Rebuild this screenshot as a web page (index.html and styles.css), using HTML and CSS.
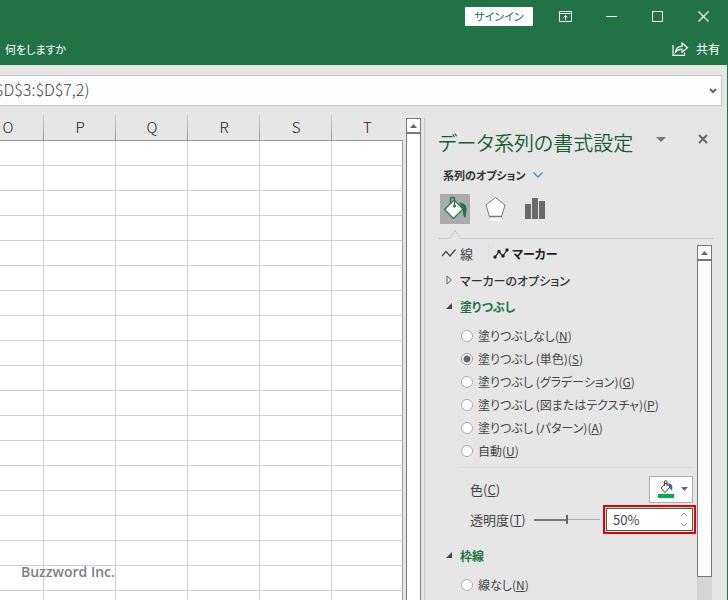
FILE: index.html
```html
<!DOCTYPE html>
<html lang="ja">
<head>
    <meta charset="UTF-8">
    <meta name="viewport" content="width=device-width, initial-scale=1.0">
    <title>Excel</title>
    <link rel="stylesheet" href="styles.css">
</head>
<body>
    <header class="title-bar">
        <div class="window-row">
            <button class="sign-in">サインイン</button>
            <button class="window-button" aria-label="リボンの表示オプション">
                <svg width="13" height="11" viewBox="0 0 13 11" fill="none" stroke="#fff"><path d="M.5 .5h12v10h-12zM.5 2.500h12M6.500 9V4.500M4.500 6.500l2-2 2 2"/></svg>
            </button>
            <button class="window-button" aria-label="最小化">
                <svg width="11" height="11" viewBox="0 0 11 11" stroke="#fff"><path d="M0 5.500h11"/></svg>
            </button>
            <button class="window-button" aria-label="最大化">
                <svg width="11" height="11" viewBox="0 0 11 11" fill="none" stroke="#fff"><path d="M.5 .5h10v10h-10z"/></svg>
            </button>
            <button class="window-button" aria-label="閉じる">
                <svg width="11" height="11" viewBox="0 0 11 11" stroke="#fff" stroke-width="1.200"><path d="M.5 .5l10 10M10.500 .5l-10 10"/></svg>
            </button>
        </div>
        <div class="ribbon-row">
            <button class="tell-me">何をしますか</button>
            <button class="share">
                <svg width="17" height="14" viewBox="0 0 17 14" fill="none" stroke="#fff" stroke-width="1.200"><path d="M1 3v10.400h11.500v-3M3.500 10c.6-4 3-5.600 6.500-5.600V1l5.500 4.700-5.500 4.500V7.200c-3 0-4.800.7-6.500 2.800z"/></svg>
                共有
            </button>
        </div>
    </header>

    <div class="formula-bar">
        <input class="formula" type="text" value="$D$3:$D$7,2)" aria-label="数式バー">
        <button class="formula-expand" aria-label="数式バーの展開">
            <svg width="8" height="6" viewBox="0 0 8 6" fill="none" stroke="#666" stroke-width="2"><path d="M1 1l3 3 3-3"/></svg>
        </button>
    </div>

    <main class="workspace">
        <div class="sheet">
            <table class="grid">
                <thead>
                    <tr><th>O</th><th>P</th><th>Q</th><th>R</th><th>S</th><th>T</th></tr>
                </thead>
                <tbody id="rows"></tbody>
            </table>
            <div class="watermark">Buzzword Inc.</div>
        </div>
        <div class="scrollbar sheet-scroll">
            <button class="scroll-up" aria-label="上へ"><svg width="7" height="4" viewBox="0 0 7 4"><path d="M0 4L3.500 0 7 4z" fill="#666"/></svg></button>
            <div class="scroll-thumb"></div>
        </div>

        <aside class="pane">
            <div class="pane-header">
                <h1>データ系列の書式設定</h1>
                <button class="pane-menu" aria-label="作業ウィンドウ オプション"><svg width="10" height="5" viewBox="0 0 10 5"><path d="M0 0h10L5 5z" fill="#777"/></svg></button>
                <button class="pane-close" aria-label="閉じる"><svg width="10" height="10" viewBox="0 0 10 10" stroke="#666" stroke-width="2"><path d="M1 1l8 8M9 1L1 9"/></svg></button>
            </div>
            <button class="series-options">系列のオプション
                <svg width="10" height="6" viewBox="0 0 10 6" fill="none" stroke="#2f8fd8" stroke-width="1.300"><path d="M.5 .5L5 5 9.500 .5"/></svg>
            </button>
            <div class="categories">
                <button class="category selected" aria-label="塗りつぶしと線">
                    <svg width="30" height="30" viewBox="0 0 30 30">
                        <path d="M19 8.500c5 0 8 3 7.500 7.500L25.500 24c-2.500-1.500-2.500-4.500-2.500-8z" fill="#217346"/>
                        <path d="M4.500 15.500L14 6l9 9-9.500 9.500z" fill="#fff" stroke="#217346" stroke-width="1.200"/>
                        <path d="M10.500 10V5q0-1.500 1.500-1.500h1q1.500 0 1.500 1.500v7" fill="none" stroke="#217346" stroke-width="1.300"/>
                        <circle cx="14.500" cy="12" r="1.500" fill="#217346"/>
                    </svg>
                </button>
                <button class="category" aria-label="効果">
                    <svg width="30" height="30" viewBox="0 0 30 30">
                        <path d="M8 23h15l1 4H7z" fill="#f7f7f7"/>
                        <path d="M9 23.500l-1 3M22 23.500l1 3" stroke="#c0c0c0"/>
                        <path d="M15.500 3.500l9.500 7.500-3.500 11.500h-12L6 11z" fill="#fff" stroke="#777"/>
                        <path d="M9 22.500h13" stroke="#777" stroke-width="1.500"/>
                    </svg>
                </button>
                <button class="category" aria-label="系列のオプション">
                    <svg width="30" height="30" viewBox="0 0 30 30" fill="#6a6a6a"><path d="M5 10h6v15H5zM12 4h6v21h-6zM19 7h6v18h-6z"/></svg>
                </button>
            </div>
            <svg class="notch" width="275" height="9" viewBox="0 0 275 9" fill="none" stroke="#c6c6c6"><path d="M0 8.500h11.500l5.500-8 5.500 8H275"/></svg>

            <div class="pane-body">
                <div class="options">
                    <div class="tabs">
                        <button class="tab">
                            <svg width="14" height="9" viewBox="0 0 14 9" fill="none" stroke="#444" stroke-width="1.200"><path d="M0 7l4-4.500L8 7l5.500-6.500"/></svg>
                            線
                        </button>
                        <button class="tab active">
                            <svg width="16" height="11" viewBox="0 0 16 11" fill="none" stroke="#222" stroke-width="1.200"><path d="M2 9l4-5 4 4 4-6"/><g fill="#222" stroke="none"><circle cx="2" cy="9" r="1.700"/><circle cx="6" cy="3.500" r="1.700"/><circle cx="10" cy="8" r="1.700"/><circle cx="14" cy="2" r="1.700"/></g></svg>
                            マーカー
                        </button>
                    </div>
                    <button class="section">
                        <svg width="8" height="10" viewBox="0 0 8 10" fill="none" stroke="#666"><path d="M2 1l4.500 4L2 9z"/></svg>
                        マーカーのオプション
                    </button>
                    <button class="section open">
                        <svg width="8" height="10" viewBox="0 0 8 10"><path d="M7 2v6H1z" fill="#444"/></svg>
                        塗りつぶし
                    </button>
                    <div class="radios">
                        <label><input type="radio" name="fill"><span>塗りつぶしなし(<u>N</u>)</span></label>
                        <label><input type="radio" name="fill" checked><span>塗りつぶし (単色)(<u>S</u>)</span></label>
                        <label><input type="radio" name="fill"><span>塗りつぶし (グラデーション)(<u>G</u>)</span></label>
                        <label><input type="radio" name="fill"><span>塗りつぶし (図またはテクスチャ)(<u>P</u>)</span></label>
                        <label><input type="radio" name="fill"><span>塗りつぶし (パターン)(<u>A</u>)</span></label>
                        <label><input type="radio" name="fill"><span>自動(<u>U</u>)</span></label>
                    </div>
                    <div class="field color-field">
                        <label for="color">色(<u>C</u>)</label>
                        <button class="color-button" id="color">
                            <svg width="16" height="18" viewBox="0 0 16 18">
                                <path d="M10 3.500c4 0 5 2.500 4 7-1.500-1-2.500-2.500-2.500-4z" fill="#2b6cab"/>
                                <path d="M3 8l5-5 4 4-5 5.500z" fill="#fff" stroke="#444"/>
                                <path d="M6.500 6V2q0-1.500 1.200-1.500T9 2v4" fill="none" stroke="#444"/>
                                <path d="M0 14h16v4H0z" fill="#00b050"/>
                            </svg>
                            <svg width="7" height="4" viewBox="0 0 7 4"><path d="M0 0h7L3.500 4z" fill="#666"/></svg>
                        </button>
                    </div>
                    <div class="field">
                        <label for="opacity">透明度(<u>T</u>)</label>
                        <input class="slider" type="range" min="0" max="100" value="50" aria-label="透明度">
                        <div class="highlight">
                            <div class="spinner">
                                <input id="opacity" type="text" value="50%">
                                <div class="steps">
                                    <button aria-label="増やす"><svg width="8" height="5" viewBox="0 0 8 5" fill="none" stroke="#888"><path d="M1 4l3-3 3 3"/></svg></button>
                                    <button aria-label="減らす"><svg width="8" height="5" viewBox="0 0 8 5" fill="none" stroke="#888"><path d="M1 1l3 3 3-3"/></svg></button>
                                </div>
                            </div>
                        </div>
                    </div>
                    <button class="section open border-section">
                        <svg width="8" height="10" viewBox="0 0 8 10"><path d="M7 2v6H1z" fill="#444"/></svg>
                        枠線
                    </button>
                    <div class="radios">
                        <label><input type="radio" name="border"><span>線なし(<u>N</u>)</span></label>
                    </div>
                </div>
                <div class="scrollbar pane-scroll">
                    <button class="scroll-up" aria-label="上へ"><svg width="7" height="4" viewBox="0 0 7 4"><path d="M0 4L3.500 0 7 4z" fill="#666"/></svg></button>
                    <div class="scroll-thumb"></div>
                </div>
            </div>
        </aside>
    </main>
    <script src="script.js"></script>
</body>
</html>
```
FILE: styles.css
```css
* { box-sizing: border-box; }

body {
    margin: 0;
    height: 100vh;
    overflow: hidden;
    display: flex;
    flex-direction: column;
    background: #e6e6e6;
    border-right: 1px solid #217346;
    color: #444;
    font-family: "Noto Sans CJK JP", sans-serif;
    font-size: 13px;
    font-feature-settings: "palt";
}
button, input {
    font: inherit;
    font-feature-settings: inherit;
    color: inherit;
    background: none;
    border: none;
    border-radius: 0;
    margin: 0;
    padding: 0;
}
button { display: flex; align-items: center; justify-content: center; white-space: nowrap; }
svg { display: block; flex: none; }

/* title bar */
.title-bar { flex: none; height: 65px; margin-right: -1px; background: #217346; color: #fff; }
.window-row { display: flex; align-items: center; justify-content: flex-end; height: 32px; padding-right: 2px; }
.sign-in { width: 68px; height: 19px; margin-right: 9px; background: #fff; color: #217346; border-radius: 1px; font-size: 11px; }
.window-button { width: 46px; height: 32px; }
.ribbon-row { display: flex; align-items: center; justify-content: space-between; height: 33px; padding: 0 8px 0 5px; }
.tell-me { font-size: 11px; }
.share { gap: 7px; font-size: 12px; }

/* formula bar */
.formula-bar {
    flex: none;
    display: flex;
    height: 31px;
    margin: 10px 5px 9px 0;
    background: #fdfdfd;
    border: 1px solid #c6c6c6;
    border-left: none;
    overflow: hidden;
}
.formula { flex: 1; min-width: 0; padding-bottom: 4px; font-size: 16px; font-weight: 300; text-indent: -5px; }
.formula-expand { width: 17px; }

/* worksheet */
.workspace { flex: 1; display: flex; min-height: 0; }
.sheet { position: relative; flex: 1; min-width: 0; display: flex; justify-content: flex-end; align-items: flex-start; overflow: hidden; }
.grid { flex: none; width: 431px; table-layout: fixed; border-collapse: separate; border-spacing: 0; }
.grid th {
    height: 26px;
    padding: 0 0 2px;
    font-size: 15px;
    font-weight: 300;
    line-height: 22px;
    color: #222;
    border-bottom: 1px solid #999;
    background: linear-gradient(#ccc, #999) right / 1px 100% no-repeat;
}
.grid th:last-child { width: 71px; background: none; }
.grid td { height: 25px; padding: 0; background: #fff; border-right: 1px solid #d0d0d0; border-bottom: 1px solid #d0d0d0; }
.grid td:last-child { border-right-color: #999; }
.watermark { position: absolute; left: 21px; bottom: 18px; font-family: "Open Sans", sans-serif; font-size: 14px; font-weight: 600; line-height: 20px; color: #808080; }

.scrollbar { flex: none; width: 15px; display: flex; flex-direction: column; background: #d4d4d4; }
.scroll-up { flex: none; height: 15px; background: #fff; border: 1px solid #777; }
.scroll-thumb { flex: 1; background: #fff; border: 1px solid #777; }
.sheet-scroll { margin: 3px 3px 0; }
.sheet-scroll .scroll-thumb { border-bottom: none; }

/* format pane */
.pane { flex: none; width: 303px; display: flex; flex-direction: column; margin-top: 3px; padding: 0 14px 0 13px; border-left: 1px solid #c6c6c6; }
.pane-header { flex: none; display: flex; align-items: center; height: 44px; padding-top: 6px; }
.pane-header h1 { flex: 1; margin: 0; font-size: 20px; font-weight: 350; line-height: 30px; white-space: nowrap; color: #185c37; }
.pane-menu { width: 20px; height: 20px; margin: 0 22px 8px 0; }
.pane-close { width: 20px; height: 20px; margin-bottom: 8px; }
.series-options { flex: none; align-self: flex-start; gap: 7px; height: 26px; margin-bottom: 2px; padding-left: 5px; font-size: 11px; font-weight: 700; color: #333; }
.categories { flex: none; display: flex; gap: 10px; height: 40px; padding: 4px 0 0 2px; }
.category { width: 30px; height: 30px; }
.category.selected { background: #ababab; }
.notch { width: 275px; }

.pane-body { flex: 1; display: flex; min-height: 0; margin-top: 6px; }
.options { flex: 1; min-width: 0; overflow: hidden; }
.pane-scroll { margin-right: 1px; }
.pane-scroll .scroll-thumb { flex: none; height: calc(100% - 38px); }
.tabs { display: flex; height: 17px; }
.tab { gap: 4px; padding: 0 15px 0 4px; border-right: 1px solid #ddd; }
.tab.active { gap: 3px; padding: 0 4px; border: none; font-size: 12px; font-weight: 700; color: #222; }
.section { height: 26px; gap: 7px; padding-left: 7px; font-size: 12px; font-weight: 500; color: #333; }
.section:first-of-type { margin-top: 5px; }
.section.open { color: #217346; font-weight: 700; }
.border-section { margin-top: 8px; }

.radios { padding: 5px 0 0 23px; font-size: 12px; }
.radios label { display: flex; align-items: center; gap: 5px; height: 23px; white-space: nowrap; }
.radios input { appearance: none; width: 12px; height: 12px; background: #fff; border: 1px solid #ababab; border-radius: 50%; }
.radios input:checked { background: radial-gradient(circle, #666 0 3px, #fff 4px); border-color: #999; }

.field { display: flex; align-items: center; height: 29px; margin-right: 1px; padding-left: 32px; }
.field label { flex: 1; white-space: nowrap; }
.color-field { height: 38px; margin: 5px 4px 0 22px; padding: 5px 0 0 10px; border-top: 1px solid #dcdcdc; }
.color-button { gap: 7px; width: 44px; height: 27px; padding-left: 3px; background: #fdfdfd; border: 1px solid #ababab; }
.slider { appearance: none; width: 66px; height: 9px; margin-right: 3px; background: linear-gradient(90deg, #777 50%, transparent 50%) center / 100% 2px no-repeat, linear-gradient(#ababab, #ababab) center / 100% 1px no-repeat; }
.slider::-webkit-slider-thumb { appearance: none; width: 2px; height: 9px; background: #666; }
.highlight { width: 93px; height: 29px; padding: 1px; border: 2px solid #e3000f; background: #fbd5d5; }
.spinner { display: flex; height: 23px; background: #fff; border: 1px solid #217346; }
.spinner input { flex: 1; min-width: 0; padding-left: 6px; }
.steps { display: flex; flex-direction: column; width: 16px; }
.steps button { flex: 1; }
```
FILE: script.js
```javascript
const rows = document.getElementById("rows");
const columns = document.querySelectorAll(".grid th").length;
const count = Math.ceil(window.innerHeight / 25);

for (let i = 0; i < count; i++) {
    const row = rows.insertRow();
    for (let c = 0; c < columns; c++) row.insertCell();
}
```
